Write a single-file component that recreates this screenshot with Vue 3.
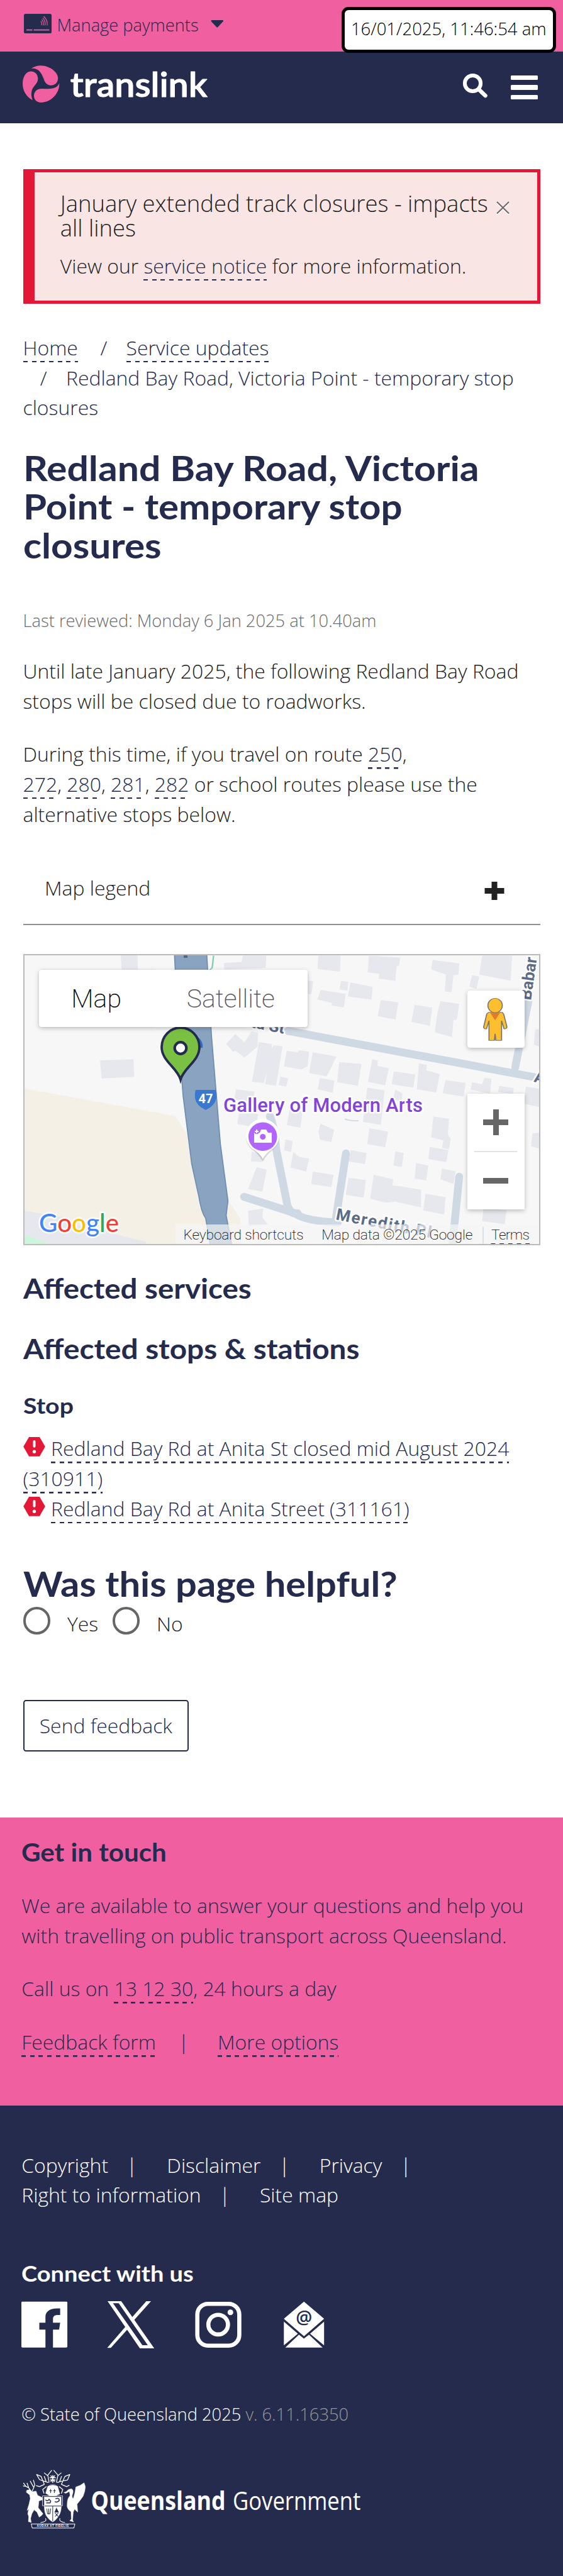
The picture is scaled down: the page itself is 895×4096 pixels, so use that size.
<script setup>
const buildings = [
  '335,44 382,44 383,124 338,124', '278,590 371,584 373,674 282,683', '623,90 672,84 676,52 741,52 739,115 624,124',
  '886,52 948,52 946,134 883,121', '1027,52 1113,62 1111,103 1104,106 1100,182 1054,170 1055,146 1023,138',
  '1204,75 1278,92 1276,150 1262,153 1257,240 1238,236 1241,150 1200,122', '1342,52 1426,52 1421,180 1334,150',
  '857,180 872,184 866,250 857,250', '949,182 969,186 967,232 945,226', '975,190 1037,212 1034,278 968,262',
  '892,228 962,248 957,318 922,308 924,294 883,278', '1060,280 1108,292 1101,381 1051,362',
  '1154,304 1203,318 1196,412 1145,392', '1226,286 1278,300 1272,380 1262,384 1258,470 1210,446 1218,340',
  '1314,153 1334,160 1326,223 1306,210', '655,455 680,498 700,440 718,450 716,520 680,575 655,540 648,545 629,505',
  '720,496 757,506 755,530 762,512 786,517 768,720 738,712 742,650 734,706 701,700',
  '798,540 828,548 832,537 860,545 856,620 838,636 790,620', '870,548 936,570 918,640 908,672 860,655',
  '944,598 1006,608 996,720 938,702', '1036,584 1052,590 1050,618 1082,630 1072,718 1024,700',
  '1096,646 1156,662 1150,730 1090,712', '1166,606 1188,612 1186,640 1224,660 1214,755 1160,738',
  '1240,690 1296,706 1290,776 1232,758', '1348,678 1368,684 1364,760 1310,740 1314,702 1342,712',
  '1390,720 1430,732 1428,762 1386,752', '1464,724 1504,736 1504,830 1456,812', '780,672 802,682 796,724 775,716',
  '890,680 930,694 926,756 884,738', '656,738 708,750 704,800 652,790', '666,850 718,865 712,934 660,916',
  '806,840 842,850 836,936 798,922', '1022,730 1070,744 1060,920 1010,905', '1206,878 1250,890 1246,970 1254,990 1250,1046 1230,1040 1234,1000 1200,985',
  '892,915 930,945 922,1010 890,996 886,955', '1028,938 1080,955 1072,1036 1022,1020', '794,996 814,1004 810,1060 790,1052',
  '976,1050 1020,1066 1016,1122 970,1108', '1100,1056 1124,1066 1118,1136 1095,1130', '1196,1034 1248,1050 1242,1112 1192,1096',
  '816,1058 832,1085 860,1094 852,1160 808,1140', '700,1060 730,1066 728,1112 698,1108', '714,1138 742,1150 730,1264 690,1250',
  '1158,1116 1192,1130 1186,1206 1154,1196', '1230,1144 1268,1160 1262,1224 1226,1200', '870,1160 928,1178 922,1240 866,1225',
  '970,1192 1018,1204 1012,1294 962,1280', '1040,1176 1094,1200 1092,1232 1114,1236 1172,1254 1172,1344 1100,1315 1072,1320 1030,1300',
  '1184,1274 1240,1292 1236,1380 1178,1360', '1482,965 1504,960 1504,1045 1478,1030', '1346,1340 1410,1360 1405,1430 1342,1415',
  '690,1362 732,1350 730,1396 745,1432 692,1440', '1100,740 1120,760 1118,800 1094,790', '1490,430 1504,430 1504,520 1486,510',
  '64,1360 180,1395 200,1430 406,1520 406,1540 64,1540',
]
</script>

<template>
  <div class="page">
    <div class="topbar">
      <svg class="card" viewBox="0 0 44 31"><rect width="44" height="31" rx="2.6" fill="#252b4d"/><path d="M4 25.6h9.500M15.500 25.6H40.500" stroke="#f060a1" stroke-width="1.9"/><path d="M27 11.500q2 3 1 6.500M28.500 8.800q3.600 4.500 2.200 9.500M30 6.300q5 5.500 3.600 12M31.500 4q6.700 6.500 5.500 14.500" fill="none" stroke="#f060a1" stroke-width="1.1"/></svg>
      <span class="manage">Manage payments</span>
      <svg class="caret" viewBox="0 0 20 12"><path d="M1 0h18q1.500 1 .5 2L11 11q-1 1-2 0L.5 2Q-.5 1 1 0z" fill="#252b4d"/></svg>
      <div class="stamp"><span>16/01/2025, 11:46:54 am</span></div>
    </div>
    <header class="header">
      <svg class="logo" viewBox="50 45 1180 245">
        <g fill="#f060a1">
          <path d="M108 68C125 58 145 50 168 50C225 50 278 95 276 130C275 160 255 174 232 174C205 174 193 155 185 130C170 90 150 64 108 68Z"/>
          <path d="M54 165C54 125 72 86 105 86C132 86 150 105 150 132C150 165 122 175 112 205C106 225 108 245 116 267C80 250 54 210 54 165Z"/>
          <path d="M284 162C288 215 240 282 170 282C140 282 125 262 125 240C125 210 148 195 175 195C215 195 265 205 284 162Z"/>
        </g>
        <text x="353" y="248" class="wordmark" textLength="862" lengthAdjust="spacingAndGlyphs">translink</text>
      </svg>
      <svg class="search" viewBox="0 0 39 38"><circle cx="15.500" cy="15.500" r="12.600" fill="none" stroke="#fff" stroke-width="6"/><path d="M25 25L35.500 35" stroke="#fff" stroke-width="6.500" stroke-linecap="round"/></svg>
      <div class="burger"><i></i><i></i><i></i></div>
    </header>

    <main>
      <section class="alert">
        <h4>January extended track closures - impacts<br>all lines</h4>
        <svg class="close" viewBox="0 0 21 22"><path d="M1 3l19 18.500M20 3L1 21.500" stroke="#fff" stroke-width="1.8"/><path d="M1 1l19 18.500M20 1L1 19.500" stroke="#6e6667" stroke-width="2"/></svg>
        <p>View our <a>service notice</a> for more information.</p>
      </section>
      <nav class="crumbs"><a>Home</a> <span class="sl">/</span><a>Service updates</a><br><span class="sl">/</span>Redland Bay Road, Victoria Point - temporary stop closures</nav>
      <h1><span class="wide l1">Redland Bay Road, Victoria</span><br><span class="wide l2">Point - temporary stop</span><br><span class="wide l3">closures</span></h1>
      <div class="reviewed">Last reviewed: Monday 6 Jan 2025 at 10.40am</div>
      <p class="para">Until late January 2025, the following Redland Bay Road stops will be closed due to roadworks.</p>
      <p class="para">During this time, if you travel on route <a>250</a>,<br><a>272</a>, <a>280</a>, <a>281</a>, <a>282</a> or school routes please use the alternative stops below.</p>
      <div class="legend"><span>Map legend</span><svg viewBox="0 0 32 29"><path d="M16 0V29M.5 14.500H31.500" stroke="#212121" stroke-width="9"/></svg></div>

      <section class="map">
        <svg class="tiles" viewBox="0 0 822 464">
          <rect width="822" height="464" fill="#f7f7f7"/>
          <g transform="scale(.5708 .3098) translate(-64 -44)">
            <path d="M64 733L487 875L520 970L555 1350L632 1300L668 1400L672 1540H64Z" fill="#f4f0e5"/>
            <g fill="#e7e8ee"><polygon v-for="(b, i) in buildings" :key="i" :points="b"/></g>
            <path d="M64 1480L150 1540H64Z" fill="#cdf5dc"/>
            <path d="M594 52L590 115L580 130" stroke="#7ccfb1" stroke-width="4" fill="none"/>
            <path d="M960 890q10 10 38 10" stroke="#cfdae5" stroke-width="6" fill="none"/>
          </g>
          <g fill="none" stroke="#cfd9e3" stroke-width="12.500" stroke-linecap="round">
            <path d="M420 122L830 199"/><path d="M803 75L782 180"/>
            <path d="M351 386L432 412Q445 424 500 427"/><path d="M392 258Q398 268 402 310L420 400Q426 415 436 412"/>
            <path d="M513 317L497 420"/><path d="M693 354L682 464"/>
          </g>
          <g transform="scale(.5708 .3098) translate(-64 -44)">
            <path d="M485 44H575L588 460L613 1020L634 1310L629 1385L645 1540H585L572 1400Q560 1370 553 1290L533 1120L509 770L497 480Z" fill="#8aa3c0" stroke="#6e8db3" stroke-width="3"/>
          </g>
          <path d="M255 2v4h6v-4z" fill="#56657f"/>
          <g class="road">
            <text x="323" y="109" transform="rotate(11 323 109)">Anita St</text>
            <text x="807" y="74" transform="rotate(-82 807 74)">Babar</text>
            <text x="811" y="203" transform="rotate(11 811 203)">A</text>
            <text x="496" y="422" transform="rotate(11 496 422)" textLength="154">Meredith Pl</text>
          </g>
          <path d="M274 216h32q2 6 1 13q-2 12-17 19q-15-7-17-19q-1-7 1-13z" fill="#3978cc"/>
          <text x="278.500" y="236.500" class="shield" textLength="23" lengthAdjust="spacingAndGlyphs">47</text>
          <text x="318" y="251.300" class="poi" textLength="317">Gallery of Modern Arts</text>
          <g>
            <path d="M380.700 330Q374 318 364 311A26.500 26.500 0 1 1 397 311Q387 318 380.700 330z" fill="#889" opacity=".35"/>
            <path d="M380.700 325.600Q376 316 364 309.500A26.500 26.500 0 1 1 397 309.500Q386 316 380.700 325.600z" fill="#fff"/>
            <circle cx="380.700" cy="290.300" r="22.800" fill="#b266ff"/>
            <path d="M367 284h9l2-5h8l3 5h6v16h-28z" fill="#fff"/><circle cx="380.800" cy="290.500" r="4.600" fill="#b266ff"/><path d="M371 278v8M367 282h8" stroke="#b266ff" stroke-width="5"/><path d="M371 279v6M368 282h6" stroke="#fff" stroke-width="2"/>
          </g>
          <path d="M276 133q9 8 7 16" stroke="#2b6bc9" stroke-width="4" fill="none"/>
          <path d="M250 199.500C245 181 220 170 220 148a30 31 0 0 1 60 0C280 170 255 181 250 199.500z" fill="#7ac143" stroke="#252b4d" stroke-width="3.800"/>
          <circle cx="250" cy="149.500" r="9.300" fill="#fff" stroke="#252b4d" stroke-width="4.200"/>
          <rect x="242" y="430" width="580" height="34" fill="#f5f5f5" opacity=".7"/>
          <g class="attr">
            <text x="254.600" y="453.500" textLength="191">Keyboard shortcuts</text>
            <text x="474.300" y="453.500" textLength="240">Map data ©2025 Google</text>
            <text x="744" y="453.500" textLength="61">Terms</text>
          </g>
          <path d="M731 434v28" stroke="#cfdae5" stroke-width="1.500"/>
          <path d="M743.500 461H806" stroke="#252b4d" stroke-width="2.200" stroke-dasharray="6.850 6.850"/>
          <text x="25" y="441.800" class="google" textLength="127" lengthAdjust="spacingAndGlyphs"><tspan fill="#4285f4">G</tspan><tspan fill="#ea4335">o</tspan><tspan fill="#fbbc05">o</tspan><tspan fill="#4285f4">g</tspan><tspan fill="#34a853">l</tspan><tspan fill="#ea4335">e</tspan></text>
        </svg>
        <div class="types"><button class="on">Map</button><button>Satellite</button></div>
        <div class="side">
          <div class="peg"><svg viewBox="1301 233 159 294" preserveAspectRatio="none"><g fill="#fdbf2d" stroke="#757575" stroke-width="3"><path d="M1360 345L1398 345L1402 355L1411 420Q1409 432 1403 430L1396 388V489H1380L1378 455L1376 489H1361V388L1354 430Q1348 432 1346 422L1355 352Z"/><ellipse cx="1378" cy="310" rx="20" ry="37"/></g><path d="M1364 346Q1378 352 1392 346L1378 386Z" fill="#df7c2f"/></svg></div>
          <div class="zoomer"><b class="plus"></b><hr><b></b></div>
        </div>
      </section>

      <h2><span class="wide h2a">Affected services</span></h2>
      <h2 class="second"><span class="wide h2b">Affected stops &amp; stations</span></h2>
      <h3><span class="wide h3">Stop</span></h3>
      <div class="stops">
        <div><svg viewBox="0 0 35 31"><path d="M9 0H26L35 15.500L26 31H9L0 15.500Z" fill="#e31836"/><path d="M17.500 7V15" stroke="#fff" stroke-width="4" stroke-linecap="round"/><circle cx="17.500" cy="23.500" r="2.700" fill="#fff"/></svg><a>Redland Bay Rd at Anita St closed mid August 2024 (310911)</a></div>
        <div><svg viewBox="0 0 35 31"><path d="M9 0H26L35 15.500L26 31H9L0 15.500Z" fill="#e31836"/><path d="M17.500 7V15" stroke="#fff" stroke-width="4" stroke-linecap="round"/><circle cx="17.500" cy="23.500" r="2.700" fill="#fff"/></svg><a>Redland Bay Rd at Anita Street (311161)</a></div>
      </div>
      <h2 class="helpful"><span class="wide h2c">Was this page helpful?</span></h2>
      <div class="radios"><i></i><label>Yes</label><i></i><label>No</label></div>
      <button class="feedback">Send feedback</button>
    </main>

    <section class="touch">
      <h2><span class="wide git">Get in touch</span></h2>
      <p>We are available to answer your questions and help you<br>with travelling on public transport across Queensland.</p>
      <p>Call us on <a>13 12 30</a>, 24 hours a day</p>
      <div class="row"><a>Feedback form</a><span class="pipe">|</span><a>More options</a></div>
    </section>

    <footer>
      <div class="links"><span>Copyright</span><i>|</i><span>Disclaimer</span><i>|</i><span>Privacy</span><i>|</i></div>
      <div class="links"><span>Right to information</span><i>|</i><span>Site map</span></div>
      <h3><span class="wide con">Connect with us</span></h3>
      <svg class="social" viewBox="0 0 482 75">
        <g fill="#fff" transform="scale(.5708 .2905) translate(-60 -1100)">
          <path d="M60 1108q0-5 3-5h122q3 0 3 5v241q0 5-3 5h-37v-98h17l3-38h-20v-20c0-15 5-22 13-22h7v-36c-30-4-41 18-41 46v32h-17v38h17v98h-64q-3 0-3-5z"/>
          <path fill-rule="evenodd" d="M300 1100H338L430 1358H390ZM315 1111L397 1341H412L331 1111Z"/>
          <path d="M408 1100H421L374 1203L368 1189ZM299 1356H309L356 1253L350 1239Z"/>
          <path d="M847 1103L903 1196L847 1292L791 1196ZM791 1212L830 1278L791 1342ZM903 1212L864 1278L903 1342ZM795 1354L833 1283L847 1305L861 1283L899 1354Z"/>
        </g>
        <g fill="none" stroke="#fff"><rect x="279.700" y="4.200" width="66.700" height="66.500" rx="17" stroke-width="6.600"/><circle cx="312.800" cy="37.300" r="15.600" stroke-width="6.600"/></g>
        <circle cx="332.300" cy="17.700" r="4.500" fill="#fff"/>
        <text x="449.300" y="36" class="at" text-anchor="middle">@</text>
      </svg>
      <div class="copy">© State of Queensland 2025 <span class="ver">v. 6.11.16350</span></div>
      <svg class="gov" viewBox="24 20 2140 375">
        <g fill="#fff" stroke="#fff" stroke-linecap="round" stroke-linejoin="round">
          <path d="M50 153L68 148L84 162L108 158L118 185L146 198L150 212L126 220L122 262L134 278L152 300L142 312L128 322L114 290L96 276L82 300L74 330L78 356L60 350L62 318L56 300L62 270L52 280L64 240L72 205L68 182L48 166Z" stroke-width="2"/>
          <path d="M78 160L62 138L44 128L30 108M62 138L52 108M44 128L28 126M84 158L94 136L84 118L72 96M94 136L100 118L92 90" fill="none" stroke-width="5"/>
          <path d="M300 160Q312 142 332 144Q346 152 338 176Q330 196 342 206L352 170L358 132L386 122L410 106L418 130L414 160L404 190L388 212L366 240L370 290L350 272L342 290L338 340L344 352L320 344L330 334L328 288Q298 270 304 236Q304 206 322 186L318 160L296 172L284 168Z" stroke-width="2"/>
          <path d="M160 195H266V235Q270 285 250 315Q232 342 213 352Q190 340 172 312Q158 285 160 240Z" fill="#fff" stroke-width="2"/>
          <path d="M150 188H275V250H150Z" fill="none" stroke-width="3"/>
          <path d="M182 126Q213 104 244 126L258 176L232 188H194L168 172Z"/>
          <path d="M213 104V60M196 74H230M198 88H228M202 62L224 98M224 62L202 98" fill="none" stroke-width="6"/>
          <path d="M190 102L182 58L206 28M236 102L246 58L220 28M180 60L160 44M246 60L266 44M184 104L160 96L130 86L112 54L140 66L152 96L160 116L130 130L110 124M242 104L266 96L306 88L320 54L290 66L276 96L268 116L300 130L316 122M160 66L172 100M268 66L256 100M172 130L150 148L158 172M254 130L276 148L268 172" fill="none" stroke-width="5"/>
          <path d="M78 365H352L346 390H84Z" fill="none" stroke-width="4"/>
          <path d="M138 356Q180 350 168 330M288 356Q250 350 258 330" fill="none" stroke-width="4"/>
        </g>
        <g fill="none" stroke="#252b4d" stroke-width="4"><path d="M213 252V348M162 252H266M178 126Q213 110 248 126M200 145V170M192 156H208M224 145V170M216 156H232M176 268L180 300H196L200 268M188 268V304M228 296L248 318M248 296L228 318"/><path d="M168 212Q178 228 190 210Q206 222 196 232H172M230 206Q256 198 254 218Q240 232 226 224" stroke-width="6"/></g>
        <g fill="#252b4d"><path d="M236 262L252 292H224Z"/></g>
        <text x="213" y="384" text-anchor="middle" class="motto" textLength="200">AUDAX AT FIDELIS</text>
        <text x="453" y="277.500" class="q" textLength="846" lengthAdjust="spacingAndGlyphs">Queensland</text>
        <text x="1344" y="277.500" class="g" textLength="804" lengthAdjust="spacingAndGlyphs">Government</text>
      </svg>
    </footer>
  </div>
</template>

<style>
html, body { margin: 0; padding: 0; background: #fff; }
</style>
<style scoped>
.page { position: relative; width: 895px; height: 4096px; overflow: hidden; font: 300 31.9px/47.8px "Open Sans", sans-serif; color: #212121; display: flex; flex-direction: column; }
.page * { box-sizing: border-box; }
svg { display: block; overflow: visible; }
h1, h2, h3, h4, p { margin: 0; }
h1, h2, h3 { font-family: Lato, sans-serif; font-weight: 700; color: #252b4d; white-space: nowrap; }
.wide { display: inline-block; transform-origin: 0 50%; }
h1 .l1 { transform: scaleX(1.112); }
h1 .l2 { transform: scaleX(1.1); }
h1 .l3 { transform: scaleX(1.105); }
.h2a { transform: scaleX(1.066); }
.h2b { transform: scaleX(1.072); }
.h3 { transform: scaleX(1.115); }
.h2c { transform: scaleX(1.094); }
.git { transform: scaleX(1.04); }
.con { transform: scaleX(1.08); }
i { font-style: normal; }
button { font: inherit; padding: 0; margin: 0; }
a { color: #252b4d; padding-bottom: 2.600px; background: repeating-linear-gradient(90deg, #252b4d 0 6.850px, transparent 6.850px 13.670px) left bottom / 100% 2.600px no-repeat; -webkit-box-decoration-break: clone; box-decoration-break: clone; }
.topbar { flex: none; height: 82px; background: #f060a1; color: #252b4d; padding-left: 37.500px; display: flex; align-items: flex-start; position: relative; }
.card { width: 44px; height: 31px; margin-top: 22px; }
.manage { font-size: 27.300px; line-height: 40px; width: 224px; margin: 20px 20px 0 9px; white-space: nowrap; }
.caret { width: 20.500px; height: 12px; margin-top: 32px; }
.stamp { position: absolute; z-index: 2; left: 543px; top: 11.400px; width: 340.500px; height: 72.800px; border: 5px solid #000; border-radius: 11px; background: #fff; color: #000; font-size: 27.500px; line-height: 60.500px; text-align: center; white-space: nowrap; }
.header { flex: none; height: 113.600px; background: #252b4d; display: flex; align-items: flex-start; padding-left: 35.400px; }
.logo { width: 298.600px; height: 62px; margin-top: 20.500px; }
.wordmark { font: 600 216px Lato; fill: #fff; stroke: #fff; stroke-width: 4px; stroke-linejoin: round; }
.search { width: 39px; height: 38px; margin: 35px 0 0 402px; }
.burger { display: flex; flex-direction: column; gap: 8px; margin: 38px 0 0 37px; }
.burger i { width: 43.500px; height: 7.400px; border-radius: 1.500px; background: #fff; }
main { padding: 0 36.500px; flex: none; height: 2694.200px; }
.alert { position: relative; margin-top: 73.100px; height: 214.200px; border: 5px solid #e31836; border-left-width: 18.200px; background: #f9e5e3; padding: 30.400px 0 0 41.300px; }
.alert h4 { font-weight: 300; font-size: 36.400px; line-height: 38.700px; white-space: nowrap; }
.alert p { margin-top: 17.300px; white-space: nowrap; }
.close { position: absolute; left: 734px; top: 46.300px; width: 21px; height: 22px; }
.crumbs { margin-top: 45.900px; color: #252b4d; }
.sl { margin: 0 30.300px 0 27.300px; }
h1 { margin-top: 41.500px; font-size: 54.600px; line-height: 61.700px; }
.reviewed { margin-top: 67.300px; font-size: 27.300px; line-height: 41px; color: #6b6b6b; white-space: nowrap; }
.para { margin-top: 36.200px; }
.legend { margin-top: 31.500px; height: 121.100px; padding: 37.600px 57px 0 34.500px; border-bottom: 2.300px solid #8f8f8f; display: flex; justify-content: space-between; }
.legend svg { width: 32px; height: 29px; margin-top: 14px; }
.map { position: relative; margin-top: 45.500px; height: 463.800px; overflow: hidden; }
.map::after { content: ""; position: absolute; inset: 0; border: 2.300px solid #bbb; }
.tiles { width: 822px; height: 464px; }
.road text { font: 700 26px Roboto; fill: #5a6c87; stroke: #fff; stroke-width: 5px; paint-order: stroke; stroke-linejoin: round; }
.shield { font: 700 20px Roboto; fill: #fff; }
.poi { font: 500 31px Roboto; fill: #8344d6; stroke: #fff; stroke-width: 5px; paint-order: stroke; stroke-linejoin: round; }
.attr text { font: 200 22.800px Roboto; fill: #111; }
.google { font: 500 41px Lato; stroke: #fff; stroke-width: 5px; paint-order: stroke; stroke-linejoin: round; }
.types { position: absolute; left: 25px; top: 25px; display: flex; box-shadow: 0 2px 7px rgba(0,0,0,.25); border-radius: 4.500px; }
.types button { border: 0; background: #fff; font: 200 41px/92.500px Roboto; height: 91px; width: 244px; color: #565656; border-radius: 0 4.500px 4.500px 0; }
.types .on { width: 183.300px; color: #000; border-radius: 4.500px 0 0 4.500px; box-shadow: 1px 0 2px rgba(0,0,0,.12); }
.side { position: absolute; left: 706px; top: 58.500px; width: 91px; display: flex; flex-direction: column; gap: 73px; }
.peg { height: 91px; background: #fff; border-radius: 4.500px; box-shadow: 0 2px 7px rgba(0,0,0,.25); }
.peg svg { width: 91px; height: 91px; }
.zoomer { height: 184px; background: #fff; box-shadow: 0 2px 7px rgba(0,0,0,.25); display: grid; grid-template-rows: 91px 2px 91px; justify-items: center; align-items: center; }
.zoomer hr { width: 68px; height: 2px; border: 0; margin: 0; background: #e2e2e2; }
.zoomer b { width: 40.500px; height: 9px; background: #666; }
.zoomer .plus { height: 41px; background: linear-gradient(#666, #666) center / 40.500px 9px no-repeat, linear-gradient(#666, #666) center / 9px 41px no-repeat; }
h2 { margin-top: 42.500px; font-size: 44.500px; line-height: 50px; }
h2.second { margin-top: 45.900px; }
h3 { margin-top: 44.800px; font-size: 35.200px; line-height: 40px; }
.stops { margin-top: 25.700px; }
.stops svg { display: inline-block; width: 35px; height: 30.700px; margin-right: 9.600px; }
h2.helpful { margin-top: 65px; font-size: 54.600px; line-height: 60px; }
.radios { margin-top: 7.700px; height: 50px; display: flex; }
.radios i { width: 43.400px; height: 43.400px; border-radius: 50%; border: 4.550px solid #666; }
.radios label { margin: 3px 0 0 27px; width: 71.800px; }
.feedback { display: block; margin-top: 97.500px; width: 263.500px; height: 81.900px; border: 2.300px solid #252b4d; border-radius: 4.500px; background: #fff; color: #252b4d; }
.touch { flex: none; height: 457.800px; background: #f060a1; color: #252b4d; padding: 32.700px 34.300px 0; }
.touch h2 { margin: 0; font-size: 40.500px; line-height: 46px; }
.touch p { margin-top: 36.200px; white-space: nowrap; }
.touch h2 + p { margin-top: 38px; }
.row { margin-top: 36.500px; display: flex; align-items: flex-start; line-height: 43.400px; padding-top: 2.200px; }
.row .pipe { margin: 0 45.600px 0 35.200px; }
footer { flex: 1; background: #252b4d; color: #fff; padding: 71.100px 34.300px 0; }
.links { display: flex; }
.links i { margin: 0 47px 0 29px; }
footer h3 { margin-top: 79.500px; color: #fff; }
.social { width: 482px; height: 75px; margin-top: 25.700px; }
.at { font: 600 29px "Open Sans"; fill: #252b4d; }
.copy { margin-top: 83.300px; font-size: 27.300px; line-height: 41px; }
.ver { color: #979797; }
.gov { width: 541.500px; height: 95px; margin: 67px 0 0 2.200px; }
.q { font: 700 160px "Open Sans"; fill: #fff; }
.g { font: 400 160px "Open Sans"; fill: #fff; }
.motto { font: 700 18px "Liberation Sans"; fill: #fff; }
</style>
